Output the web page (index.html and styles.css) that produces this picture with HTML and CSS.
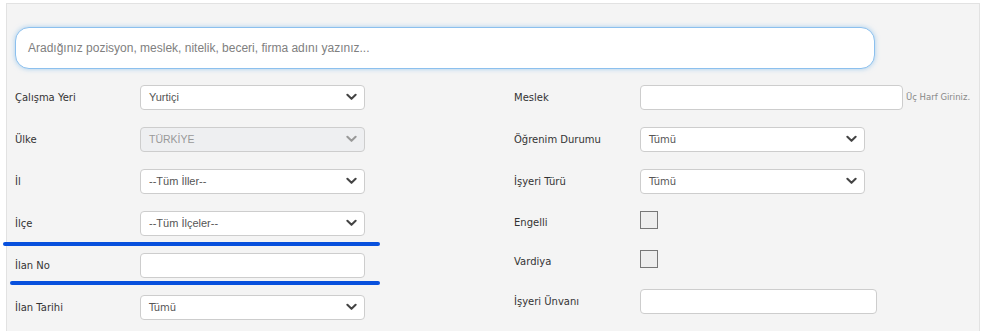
FILE: index.html
```html
<!DOCTYPE html>
<html lang="tr">
<head>
  <meta charset="UTF-8">
  <title>İş Ara</title>
  <link rel="stylesheet" href="styles.css">
</head>
<body>
  <div class="panel">
    <div class="search">Aradığınız pozisyon, meslek, nitelik, beceri, firma adını yazınız...</div>

    <div class="form">
      <div class="col col-left">
        <div class="row">
          <label>Çalışma Yeri</label>
          <div class="select"><span>Yurtiçi</span><svg class="chev" viewBox="0 0 12 8"><path d="M1.5 1.5 L6 6 L10.5 1.5"/></svg></div>
        </div>
        <div class="row">
          <label>Ülke</label>
          <div class="select disabled"><span>TÜRKİYE</span><svg class="chev" viewBox="0 0 12 8"><path d="M1.5 1.5 L6 6 L10.5 1.5"/></svg></div>
        </div>
        <div class="row">
          <label>İl</label>
          <div class="select"><span>--Tüm İller--</span><svg class="chev" viewBox="0 0 12 8"><path d="M1.5 1.5 L6 6 L10.5 1.5"/></svg></div>
        </div>
        <div class="row">
          <label>İlçe</label>
          <div class="select"><span>--Tüm İlçeler--</span><svg class="chev" viewBox="0 0 12 8"><path d="M1.5 1.5 L6 6 L10.5 1.5"/></svg></div>
        </div>
        <div class="row">
          <label>İlan No</label>
          <div class="input"></div>
        </div>
        <div class="row">
          <label>İlan Tarihi</label>
          <div class="select"><span class="wide">Tümü</span><svg class="chev" viewBox="0 0 12 8"><path d="M1.5 1.5 L6 6 L10.5 1.5"/></svg></div>
        </div>
      </div>

      <div class="col col-right">
        <div class="row">
          <label>Meslek</label>
          <div class="input meslek"></div>
          <span class="hint">Üç Harf Giriniz.</span>
        </div>
        <div class="row">
          <label>Öğrenim Durumu</label>
          <div class="select"><span class="wide">Tümü</span><svg class="chev" viewBox="0 0 12 8"><path d="M1.5 1.5 L6 6 L10.5 1.5"/></svg></div>
        </div>
        <div class="row">
          <label>İşyeri Türü</label>
          <div class="select"><span class="wide">Tümü</span><svg class="chev" viewBox="0 0 12 8"><path d="M1.5 1.5 L6 6 L10.5 1.5"/></svg></div>
        </div>
        <div class="row row-check">
          <label>Engelli</label>
          <div class="check"></div>
        </div>
        <div class="row row-check short">
          <label>Vardiya</label>
          <div class="check"></div>
        </div>
        <div class="row">
          <label>İşyeri Ünvanı</label>
          <div class="input unvan"></div>
        </div>
      </div>
    </div>

    <!-- highlight marks around İlan No -->
    <div class="mark mark-top"></div>
    <div class="mark mark-bottom"></div>
  </div>
</body>
</html>
```

FILE: styles.css
```css
body { margin: 0; background: #fff; font-family: "DejaVu Sans", Verdana, sans-serif; }
.panel {
  position: relative;
  margin: 3px 3px 0 6px; height: 330px; box-sizing: border-box;
  background: #f4f4f4; border: 1px solid #e2e2e2; border-bottom: none;
  padding: 23px 8px 0 8px;
}

.search {
  width: 860px; height: 42px; box-sizing: border-box;
  border: 1px solid #8cc0ee; border-radius: 14px; background: #fff;
  box-shadow: 0 0 5px rgba(102,175,233,0.55);
  padding: 0 12px; display: flex; align-items: center;
  font-family: "Liberation Sans", Arial, sans-serif; font-size: 12px; color: #808080;
}

.form { display: flex; margin-top: 7px; }
.col-left { width: 499px; }
.col { display: flex; flex-direction: column; }

.row { height: 42px; display: flex; align-items: center; white-space: nowrap; }
.row label { font-size: 10px; color: #333; }
.col-left .row label { width: 125px; flex: none; }
.col-right .row label { width: 126px; flex: none; }
.row-check { height: 40px; }
.row-check.short { height: 38px; }
.row-check .check { margin-bottom: 4px; }

.select, .input {
  height: 25px; box-sizing: border-box; background: #fff; flex: none;
  border: 1px solid #cdcdcd; border-radius: 4px;
}
.select {
  width: 225px; display: flex; align-items: center; justify-content: space-between;
  padding: 0 7px 0 8px;
  font-family: "Liberation Sans", Arial, sans-serif; font-size: 11px; color: #555;
}
.col-right .select { width: 225px; }
.select .wide { font-family: "DejaVu Sans", Verdana, sans-serif; font-size: 10px; }
.select.disabled { background: #eeeff1; color: #999; font-size: 10.5px; }
.chev { width: 11px; height: 8px; fill: none; stroke: #444; stroke-width: 2.2; stroke-linecap: round; stroke-linejoin: round; }
.select.disabled .chev { stroke: #999; }

.input { width: 225px; }
.input.meslek { width: 263px; }
.input.unvan { width: 237px; }
.hint { margin-left: 3px; font-size: 8.5px; color: #888; }

.check { width: 18px; height: 18px; box-sizing: border-box; border: 1px solid #777; background: #eee; flex: none; }

.mark { position: absolute; height: 4px; background: #0750dd; border-radius: 2px; }
.mark-top { left: -4px; width: 377px; top: 238px; }
.mark-bottom { left: 3px; width: 370px; top: 277px; }
```
